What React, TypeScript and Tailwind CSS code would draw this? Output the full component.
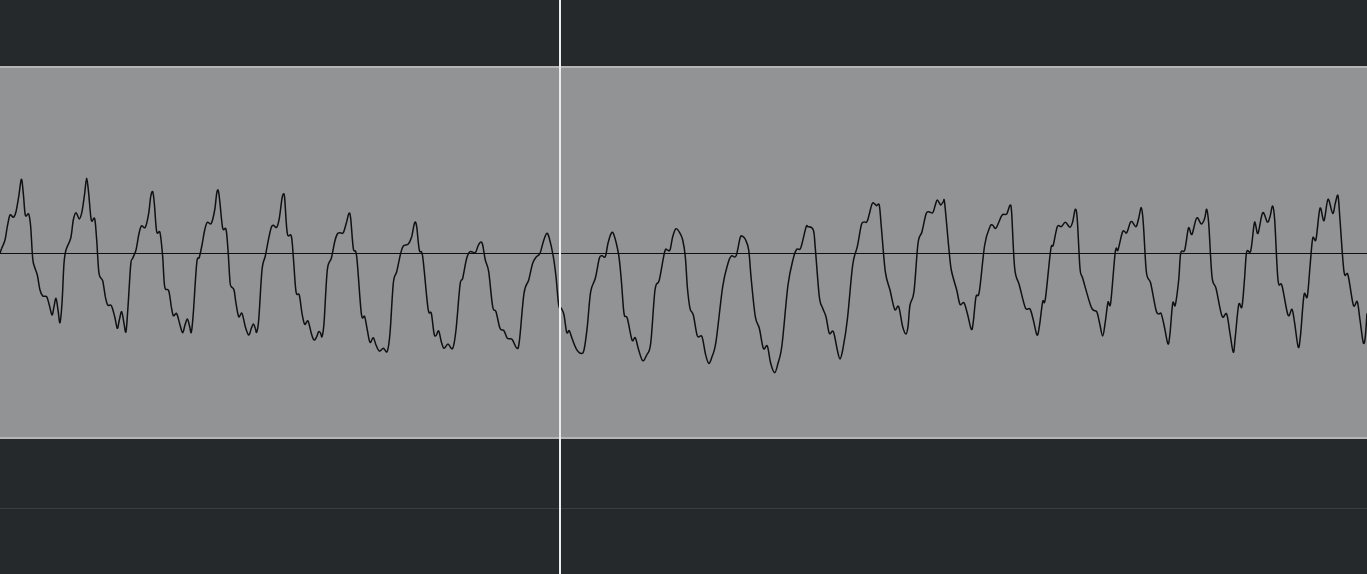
import React from 'react';

type Pt = [number, number];

// traced from the clip, each run is in its own crop coords (3x) with an origin
const RUNS: { x0: number; y0: number; pts: Pt[] }[] = [
  {
    x0: 0, y0: 170,
    pts: [[0,250],[5,235],[15,210],[22,170],[30,135],[40,142],[48,125],[56,80],[64,28],[70,70],[76,135],[86,132],[92,170],[98,265],[104,292],[112,315],[120,360],[128,378],[140,380],[148,405],[156,435],[162,410],[168,385],[174,420],[180,458],[186,400],[192,280],[198,240],[212,205],[220,150],[228,128],[238,147],[246,125],[254,70],[260,25],[266,70],[274,150],[284,146],[290,210],[297,310],[308,332],[316,380],[323,405],[334,407],[344,440],[352,475],[358,450],[365,425],[372,460],[378,485],[384,410],[392,285],[398,265],[408,240],[416,195],[424,168],[436,172],[446,130],[452,80],[458,65],[463,100],[470,185],[480,188],[488,260],[494,350],[506,362],[514,410],[520,437],[530,431],[540,465],[548,488],[555,465],[562,447],[568,465],[574,487],[580,430],[590,280],[598,262],[606,225],[614,180],[622,157],[634,160],[644,120],[650,70],[655,62],[660,100],[668,175],[678,178],[684,240],[690,335]],
  },
  {
    x0: 230, y0: 170,
    pts: [[4,350],[12,360],[18,400],[26,440],[36,430],[46,470],[56,495],[64,475],[70,462],[76,475],[80,487],[86,450],[96,300],[106,258],[116,205],[124,172],[130,166],[140,172],[148,145],[156,85],[160,72],[164,85],[172,190],[184,198],[190,260],[198,365],[208,375],[216,430],[224,463],[234,453],[244,490],[252,510],[260,500],[266,485],[272,490],[276,500],[282,460],[292,300],[304,265],[314,215],[322,192],[330,188],[340,188],[350,155],[357,130],[362,145],[370,235],[380,260],[394,430],[404,440],[412,480],[420,517],[430,503],[438,525],[448,543],[460,535],[472,544],[480,490],[490,340],[500,305],[512,250],[520,228],[535,222],[545,200],[554,158],[560,170],[568,240],[578,260],[594,415],[604,430],[612,490],[618,497],[626,483],[634,515],[642,535],[654,522],[668,535],[678,480],[690,345]],
  },
  {
    x0: 450, y0: 200,
    pts: [[38,235],[50,175],[60,155],[76,158],[84,138],[92,126],[98,135],[106,180],[116,215],[128,320],[138,335],[150,385],[162,392],[172,415],[186,418],[200,444],[208,425],[222,280],[236,240],[248,190],[258,172],[270,160],[280,125],[290,100],[298,115],[310,170],[318,230],[326,315],[334,325],[342,345],[350,397],[358,392],[366,415],[378,445],[392,460],[402,450],[412,380],[422,275],[436,235],[448,175],[456,167],[466,170],[474,130],[484,100],[492,105],[506,165],[514,240],[522,340],[532,355],[546,420],[556,413],[566,450],[578,482],[590,465],[602,430],[615,270],[628,240],[644,155],[652,150],[660,150],[668,110],[678,86],[690,100]],
  },
  {
    x0: 680, y0: 190,
    pts: [[8,150],[16,200],[22,290],[30,355],[40,375],[52,437],[66,440],[76,490],[86,520],[96,500],[108,455],[128,290],[144,220],[154,198],[168,198],[180,145],[186,138],[196,148],[206,180],[214,270],[226,380],[238,415],[250,475],[262,468],[272,520],[284,548],[294,520],[306,465],[324,285],[340,205],[350,178],[362,174],[378,112],[384,110],[400,120],[406,175],[418,320],[428,355],[438,380],[448,430],[460,425],[472,480],[480,507],[488,480],[502,390],[518,225],[532,170],[544,105],[552,96],[562,93],[576,42],[584,42],[590,47],[598,46],[604,110],[616,245],[630,300],[644,358],[656,350],[668,410],[678,432],[684,410],[690,345]],
  },
  {
    x0: 900, y0: 190,
    pts: [[42,305],[54,160],[66,125],[78,72],[86,65],[98,68],[106,45],[112,30],[122,45],[130,35],[134,40],[146,170],[154,240],[170,300],[180,343],[192,338],[202,370],[214,418],[220,395],[228,320],[238,305],[254,165],[270,110],[278,106],[288,114],[306,76],[320,72],[330,46],[335,70],[344,235],[358,285],[376,353],[390,357],[400,390],[411,435],[418,410],[428,335],[436,328],[452,180],[460,165],[472,110],[484,110],[496,97],[510,112],[518,95],[526,58],[532,90],[540,235],[548,265],[574,352],[590,365],[598,395],[608,438],[616,395],[624,337],[632,338],[646,185],[654,180],[668,125],[680,128],[690,100]],
  },
  {
    x0: 1130, y0: 190,
    pts: [[6,95],[18,110],[26,85],[34,53],[40,100],[48,235],[54,265],[62,280],[78,360],[86,372],[94,372],[104,415],[114,462],[120,430],[128,340],[136,345],[146,270],[152,190],[164,180],[174,120],[178,115],[186,133],[200,84],[214,102],[224,85],[230,58],[236,100],[246,260],[258,295],[276,378],[290,372],[300,430],[310,487],[316,440],[326,344],[336,350],[344,260],[350,185],[362,183],[372,105],[376,100],[384,130],[398,68],[412,96],[420,80],[428,48],[434,90],[444,270],[456,287],[474,375],[486,358],[494,400],[505,472],[512,430],[522,315],[532,320],[540,230],[548,145],[558,148],[570,55],[582,92],[594,28],[608,70],[616,40],[624,17],[630,90],[642,245],[654,255],[670,345],[682,335],[690,390],[700,458],[706,440],[711,370]],
  },
];

const PANEL_TOP = 68;

// catmull-rom, so the trace goes through every traced point and keeps its peaks
const buildPath = () => {
  const pts: Pt[] = RUNS.flatMap((r) =>
    r.pts.map(([x, y]): Pt => [r.x0 + x / 3, r.y0 + y / 3 - PANEL_TOP])
  );
  let d = `M${pts[0][0].toFixed(1)} ${pts[0][1].toFixed(1)}`;
  for (let i = 0; i < pts.length - 1; i++) {
    const p0 = pts[Math.max(i - 1, 0)];
    const p1 = pts[i];
    const p2 = pts[i + 1];
    const p3 = pts[Math.min(i + 2, pts.length - 1)];
    const c1x = p1[0] + (p2[0] - p0[0]) / 6;
    const c1y = p1[1] + (p2[1] - p0[1]) / 6;
    const c2x = p2[0] - (p3[0] - p1[0]) / 6;
    const c2y = p2[1] - (p3[1] - p1[1]) / 6;
    d += `C${c1x.toFixed(1)} ${c1y.toFixed(1)} ${c2x.toFixed(1)} ${c2y.toFixed(1)} ${p2[0].toFixed(1)} ${p2[1].toFixed(1)}`;
  }
  return d;
};

const App: React.FC = () => {
  return (
    <div className="relative w-full h-[574px] overflow-hidden flex flex-col bg-[#25292c]">
      <div className="h-[66px] shrink-0" />
      <div className="relative h-[373px] shrink-0 bg-[#929395] border-y-2 border-[#b4b5b5]">
        <div className="absolute left-0 right-0 top-[185px] h-px bg-[#0c0e10]" />
        <svg className="absolute left-0 top-0 w-full h-full overflow-visible" fill="none">
          <path d={buildPath()} stroke="#0e1012" strokeWidth="1.5" strokeLinejoin="round" />
        </svg>
      </div>
      <div className="h-[70px] shrink-0 border-b border-[#3a3e41]" />
      <div className="flex-1" />
      <div className="absolute top-0 bottom-0 left-[559px] w-[2px] bg-[#eceded]" />
    </div>
  );
};

export default App;
